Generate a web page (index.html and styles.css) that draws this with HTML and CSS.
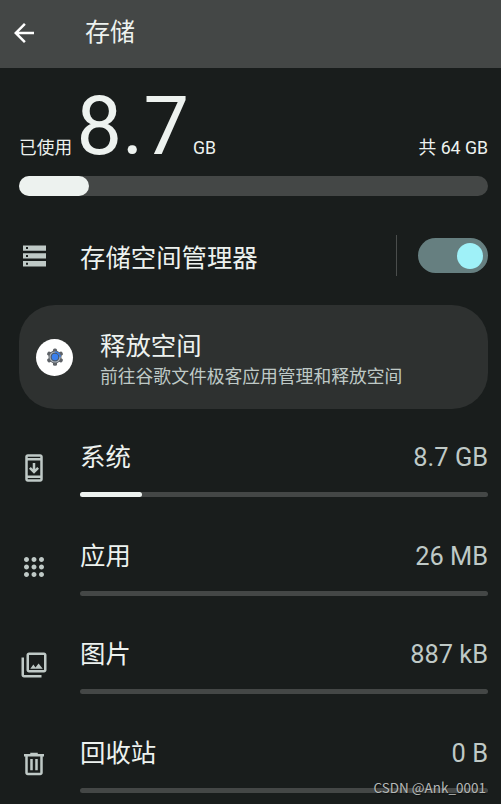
FILE: index.html
```html
<!DOCTYPE html>
<html lang="zh-CN">
<head>
    <meta charset="UTF-8">
    <meta name="viewport" content="width=device-width, initial-scale=1.0">
    <title>存储</title>
    <link rel="stylesheet" href="styles.css">
</head>
<body>
    <header class="topbar">
        <svg class="back" viewBox="0 0 24 24"><path d="M20 11H7.83l5.59-5.59L12 4l-8 8 8 8 1.41-1.41L7.83 13H20v-2z"/></svg>
        <h1>存储</h1>
    </header>
    <main>
        <div class="summary">
            <span class="used-label">已使用</span>
            <span class="used-value">8.7</span>
            <span class="used-unit">GB</span>
            <span class="total">共 64 GB</span>
        </div>
        <div class="usage-bar"><div class="usage-fill" style="width: 15%"></div></div>

        <div class="manager">
            <svg class="icon" viewBox="0 0 30 30"><path fill-rule="evenodd" d="M4 4.5h23v5.3H4zM7 6h2v2H7zM4 12.3h23v5.3H4zM7 14h2v2H7zM4 20h23v5.5H4zM7 21.7h2v2H7z"/></svg>
            <span class="manager-title">存储空间管理器</span>
            <span class="divider"></span>
            <span class="switch"><span class="thumb"></span></span>
        </div>

        <div class="card">
            <div class="card-icon">
                <svg viewBox="0 0 24 24">
                    <g fill="#5f6368">
                        <rect x="9.3" y="0.5" width="5.4" height="23" rx="2"/>
                        <rect x="9.3" y="0.5" width="5.4" height="23" rx="2" transform="rotate(60 12 12)"/>
                        <rect x="9.3" y="0.5" width="5.4" height="23" rx="2" transform="rotate(120 12 12)"/>
                        <circle cx="12" cy="12" r="8.7"/>
                    </g>
                    <circle cx="12" cy="12" r="6.7" fill="#4b596a" stroke="#aeb6bf" stroke-width="1.5"/>
                    <path d="M12 5.2a6.8 6.8 0 0 1 6.8 6.8" fill="none" stroke="#3979db" stroke-width="2"/>
                    <circle cx="12" cy="12" r="4.3" fill="#3b80ed"/>
                </svg>
            </div>
            <div class="card-text">
                <h2>释放空间</h2>
                <p>前往谷歌文件极客应用管理和释放空间</p>
            </div>
        </div>

        <div class="list">
            <div class="row">
                <svg class="icon" viewBox="0 0 24 24"><path d="M17 1H7c-1.1 0-2 .9-2 2v18c0 1.1.9 2 2 2h10c1.1 0 2-.9 2-2V3c0-1.1-.9-2-2-2zm0 20H7v-1h10v1zm0-3H7V6h10v12zm0-14H7V3h10v1zm-1 8.5l-4 4-4-4 1.4-1.4 1.6 1.6V8h2v4.7l1.6-1.6 1.4 1.4z"/></svg>
                <span class="name">系统</span>
                <span class="size">8.7 GB</span>
                <div class="bar"><div class="fill" style="width: 15.2%"></div></div>
            </div>
            <div class="row">
                <svg class="icon" viewBox="0 0 24 24"><path d="M6 8c1.1 0 2-.9 2-2s-.9-2-2-2-2 .9-2 2 .9 2 2 2zm6 12c1.1 0 2-.9 2-2s-.9-2-2-2-2 .9-2 2 .9 2 2 2zm-6 0c1.1 0 2-.9 2-2s-.9-2-2-2-2 .9-2 2 .9 2 2 2zm0-6c1.1 0 2-.9 2-2s-.9-2-2-2-2 .9-2 2 .9 2 2 2zm6 0c1.1 0 2-.9 2-2s-.9-2-2-2-2 .9-2 2 .9 2 2 2zm4-8c0 1.1.9 2 2 2s2-.9 2-2-.9-2-2-2-2 .9-2 2zm-4 2c1.1 0 2-.9 2-2s-.9-2-2-2-2 .9-2 2 .9 2 2 2zm6 6c1.1 0 2-.9 2-2s-.9-2-2-2-2 .9-2 2 .9 2 2 2zm0 6c1.1 0 2-.9 2-2s-.9-2-2-2-2 .9-2 2 .9 2 2 2z"/></svg>
                <span class="name">应用</span>
                <span class="size">26 MB</span>
                <div class="bar"></div>
            </div>
            <div class="row">
                <svg class="icon" viewBox="0 0 24 24"><path d="M20 4v12H8V4h12m0-2H8c-1.1 0-2 .9-2 2v12c0 1.1.9 2 2 2h12c1.1 0 2-.9 2-2V4c0-1.1-.9-2-2-2zm-8.5 9.67l1.69 2.26 2.48-3.1L19 15H9l2.5-3.33zM2 6v14c0 1.1.9 2 2 2h14v-2H4V6H2z"/></svg>
                <span class="name">图片</span>
                <span class="size">887 kB</span>
                <div class="bar"></div>
            </div>
            <div class="row">
                <svg class="icon" viewBox="0 0 24 24"><path d="M15 4V3H9v1H4v2h1v13c0 1.1.9 2 2 2h10c1.1 0 2-.9 2-2V6h1V4h-5zm2 15H7V6h10v13zM9 8h2v9H9V8zm4 0h2v9h-2V8z"/></svg>
                <span class="name">回收站</span>
                <span class="size">0 B</span>
                <div class="bar"></div>
            </div>
        </div>
    </main>
    <div class="watermark">CSDN @Ank_0001</div>
</body>
</html>
```
FILE: styles.css
```css
* {
    box-sizing: border-box;
}
body {
    margin: 0;
    height: 804px;
    position: relative;
    overflow: hidden;
    background: #191d1c;
    color: #edf2ef;
    font-family: Roboto, "Noto Sans CJK SC", sans-serif;
}
h1, h2, p {
    margin: 0;
    font-weight: 400;
}
.topbar {
    display: flex;
    align-items: center;
    height: 68px;
    padding: 0 0 2px 9px;
    background: #444746;
}
.back {
    width: 30px;
    height: 30px;
    margin-right: 46px;
    fill: #fff;
}
h1 {
    font-size: 25px;
    line-height: 36px;
}
main {
    padding: 0 13px 0 19px;
}
.summary {
    display: flex;
    align-items: baseline;
    height: 108px;
    padding-top: 13px;
    font-size: 17.7px;
    line-height: 92px;
    white-space: nowrap;
}
.used-value {
    margin: 0 4px 0 4.5px;
    font-size: 81px;
}
.total {
    margin-left: auto;
}
.usage-bar {
    height: 20px;
    border-radius: 10px;
    background: #444746;
}
.usage-fill {
    height: 100%;
    border-radius: 10px;
    background: #edf2ef;
}
.icon {
    width: 30px;
    height: 30px;
    fill: #bfc9c6;
}
.manager {
    display: flex;
    align-items: center;
    height: 41px;
    margin-top: 39px;
}
.manager-title {
    flex: 1;
    margin-left: 31px;
    padding-top: 4px;
    font-size: 25.4px;
    line-height: 36px;
}
.divider {
    width: 1px;
    height: 41px;
    margin-right: 21px;
    background: #4a4d4c;
}
.switch {
    display: flex;
    align-items: center;
    justify-content: flex-end;
    width: 70px;
    height: 35px;
    padding-right: 5px;
    border-radius: 18px;
    background: #667f80;
}
.thumb {
    width: 26px;
    height: 26px;
    border-radius: 50%;
    background: #9ff1f8;
}
.card {
    display: flex;
    align-items: center;
    height: 104px;
    margin-top: 29px;
    padding-left: 17px;
    border-radius: 36px;
    background: #2e3130;
}
.card-icon {
    display: flex;
    align-items: center;
    justify-content: center;
    width: 37px;
    height: 37px;
    margin-right: 27px;
    padding-bottom: 1px;
    border-radius: 50%;
    background: #fff;
}
.card-icon svg {
    width: 18px;
    height: 18px;
}
.card-text {
    padding-top: 4px;
}
.card-text h2 {
    font-size: 25.4px;
    line-height: 36px;
}
.card-text p {
    color: #bfc9c6;
    font-size: 17.8px;
    line-height: 26px;
}
.list {
    margin-top: 30px;
}
.row {
    display: grid;
    grid-template-columns: 61px 1fr auto;
    grid-template-rows: 36px 5px;
    row-gap: 17px;
    height: 98.7px;
}
.row .icon {
    grid-row: 1 / 3;
    align-self: center;
}
.name, .size {
    font-size: 25.4px;
    line-height: 36px;
}
.size {
    color: #bfc9c6;
}
.bar {
    grid-column: 2 / 4;
    height: 5px;
    border-radius: 3px;
    background: #444746;
}
.fill {
    height: 100%;
    border-radius: 3px;
    background: #edf2ef;
}
.watermark {
    position: absolute;
    right: 15px;
    bottom: 8px;
    color: #b5b8b7;
    font-family: "Noto Sans CJK SC", sans-serif;
    font-size: 13.5px;
    line-height: 18px;
    text-shadow: 1px 1px 1px rgba(0, 0, 0, 0.5);
}
```
